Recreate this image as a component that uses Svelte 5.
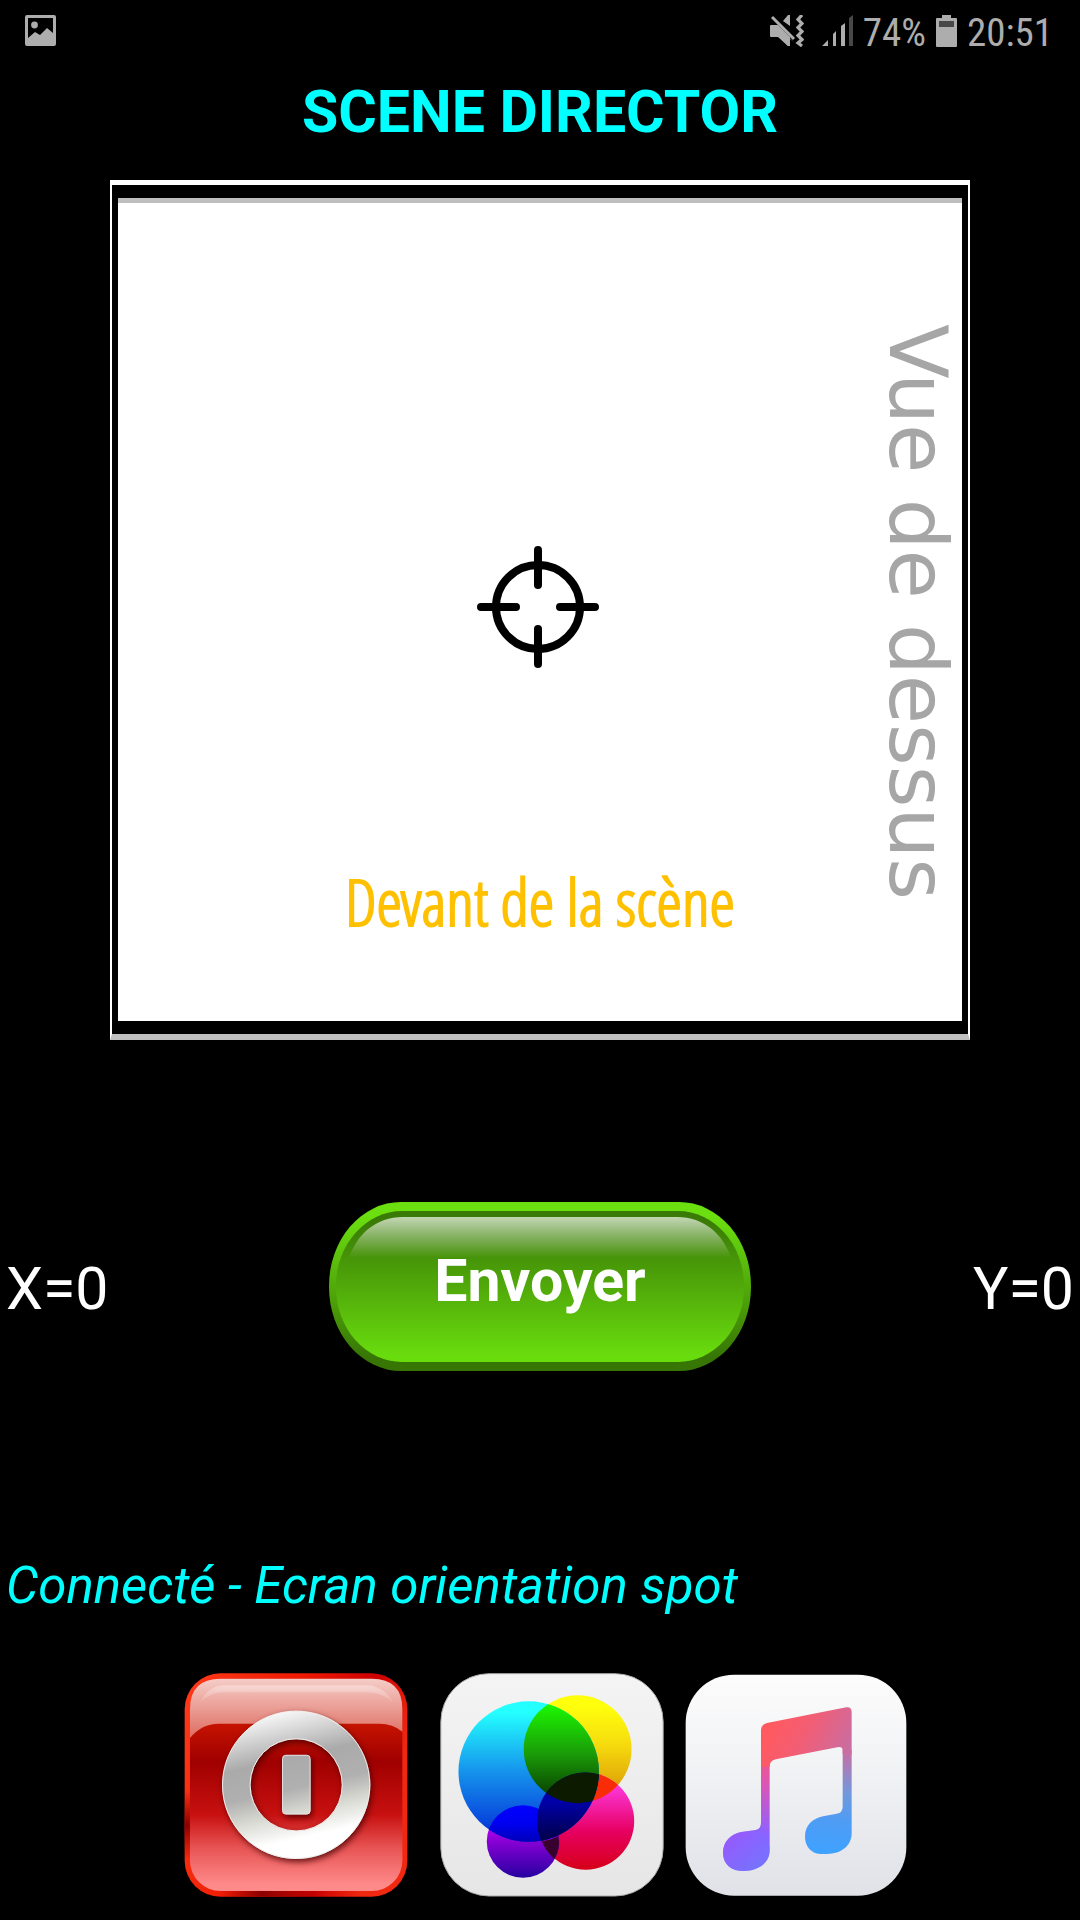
<script>
  let x = $state(0);
  let y = $state(0);
  let status = $state('Connecté - Ecran orientation spot');
</script>

<div class="screen">
  <div class="statusbar">
    <svg class="picture" viewBox="0 0 31 31" aria-hidden="true">
      <path fill="#adadad" fill-rule="evenodd" d="M2 0H29Q31 0 31 2V29Q31 31 29 31H2Q0 31 0 29V2Q0 0 2 0ZM3 3V23L10 17L15 20L22 13L28 18V3Z" />
      <circle cx="9.500" cy="10" r="3.400" fill="#adadad" />
    </svg>
    <div class="indicators">
      <svg class="mute" viewBox="0 0 34 32" aria-hidden="true">
        <path fill="#adadad" d="M1 10H5L24 27L20 24V31H18L9 22H1Q0 22 0 21V11Q0 10 1 10ZM18 0H20V11L13 6Z" />
        <path fill="#adadad" d="M4 10H8L20 22V31H18L8 22H4Z" />
        <path d="M2 2L24 24" stroke="#adadad" stroke-width="3" />
        <path d="M32 0L28 4.500L32 8.500L28 12.500L32 16.500L28 20.500L32 24.500L28 28L32 31" fill="none" stroke="#adadad" stroke-width="3.200" />
      </svg>
      <svg class="signal" viewBox="0 0 31 32" aria-hidden="true">
        <path fill="#adadad" d="M0 31L6 25V31ZM11 19L14 16V31H11ZM19 11L23 8V31H19Z" />
        <path fill="#484848" d="M27 3L31 0V31H27Z" />
      </svg>
      <span class="battery-text">74%</span>
      <svg class="battery" viewBox="0 0 21 32" aria-hidden="true">
        <path fill="#adadad" d="M6 0H15V3H20Q21 3 21 4V31Q21 32 20 32H1Q0 32 0 31V4Q0 3 1 3H6Z" />
        <path fill="#484848" d="M3 6H18V12H3Z" />
      </svg>
      <span class="clock">20:51</span>
    </div>
  </div>

  <h1>SCENE DIRECTOR</h1>

  <main>
    <section class="stage" aria-label="Scène">
      <div class="floor">
        <svg class="target" viewBox="0 0 122 122" aria-hidden="true">
          <g fill="none" stroke="#000" stroke-width="8" stroke-linecap="round">
            <circle cx="61" cy="61" r="42" />
            <path d="M61 4V39M61 83V118M4 61H39M83 61H118" />
          </g>
        </svg>
        <span class="front">Devant de la scène</span>
        <span class="top">Vue de dessus</span>
      </div>
    </section>

    <div class="controls">
      <span class="coord">X={x}</span>
      <button class="send" type="button">
        <svg viewBox="0 0 422 169" preserveAspectRatio="none" aria-hidden="true">
          <defs>
            <linearGradient id="rim" x2="0" y2="1"><stop offset="0.080" stop-color="#6bdf0f" /><stop offset="0.920" stop-color="#377605" /></linearGradient>
            <linearGradient id="body" x2="0" y2="1"><stop offset="0" stop-color="#397a06" /><stop offset="0.080" stop-color="#3a7c06" /><stop offset="0.320" stop-color="#479508" /><stop offset="0.960" stop-color="#69dc0e" /></linearGradient>
            <linearGradient id="gloss" x2="0" y2="1"><stop offset="0" stop-color="#fff" stop-opacity="0.700" /><stop offset="1" stop-color="#fff" stop-opacity="0" /></linearGradient>
          </defs>
          <rect width="422" height="169" rx="72" ry="84" fill="url(#rim)" />
          <rect x="7" y="9" width="408" height="151" rx="66" ry="75" fill="url(#body)" />
          <path d="M20 56C28 32 47 15 74 15H348C375 15 394 32 402 56Z" fill="url(#gloss)" />
        </svg>
        <span>Envoyer</span>
      </button>
      <span class="coord">Y={y}</span>
    </div>

    <p class="status">{status}</p>
  </main>

  <nav>
    <button type="button" aria-label="Arrêt">
      <svg viewBox="42 36 673 675" aria-hidden="true">
        <defs>
          <linearGradient id="frame" x2="1" y2="0.300"><stop offset="0" stop-color="#ff3a1a" /><stop offset="0.500" stop-color="#ee1800" /><stop offset="0.800" stop-color="#cc0000" /><stop offset="1" stop-color="#f02810" /></linearGradient>
          <linearGradient id="left" x2="0" y2="1"><stop offset="0" stop-color="#8c0000" stop-opacity="0" /><stop offset="0.500" stop-color="#8c0000" /><stop offset="1" stop-color="#8c0000" stop-opacity="0" /></linearGradient>
          <linearGradient id="base"><stop offset="0" stop-color="#8c0000" stop-opacity="0" /><stop offset="0.400" stop-color="#8c0000" /><stop offset="1" stop-color="#8c0000" stop-opacity="0" /></linearGradient>
          <linearGradient id="red" x2="0" y2="1"><stop offset="0.200" stop-color="#c81400" /><stop offset="0.390" stop-color="#a00000" /><stop offset="0.640" stop-color="#c81010" /><stop offset="0.800" stop-color="#e85555" /><stop offset="0.970" stop-color="#ff8a8a" /></linearGradient>
          <linearGradient id="shine" x2="0" y2="1"><stop offset="0" stop-color="#f5cdc8" /><stop offset="1" stop-color="#df6c60" /></linearGradient>
          <linearGradient id="arc" x2="0" y2="1"><stop offset="0" stop-color="#fff" stop-opacity="0.350" /><stop offset="1" stop-color="#fff" stop-opacity="0.100" /></linearGradient>
          <linearGradient id="metal" gradientUnits="userSpaceOnUse" x1="330" y1="150" x2="430" y2="595"><stop offset="0" stop-color="#fafafa" /><stop offset="0.320" stop-color="#aaa" /><stop offset="0.520" stop-color="#b0b0b0" /><stop offset="0.680" stop-color="#d8dad2" /><stop offset="0.850" stop-color="#fff" /></linearGradient>
          <filter id="shadow" x="-20%" y="-20%" width="140%" height="140%"><feDropShadow dx="5" dy="9" stdDeviation="9" flood-color="#400" flood-opacity="0.800" /></filter>
        </defs>
        <rect x="43" y="37" width="671" height="673" rx="108" fill="url(#frame)" />
        <rect x="43" y="390" width="30" height="210" fill="url(#left)" />
        <rect x="150" y="680" width="320" height="30" fill="url(#base)" />
        <rect x="59" y="53" width="640" height="640" rx="92" fill="url(#red)" />
        <path d="M59 232V145Q59 53 151 53H607Q699 53 699 145V213Q670 189 630 189H145Q95 189 59 232Z" fill="url(#shine)" />
        <path d="M90 124Q115 73 165 73H590Q640 73 672 124Q635 94 595 94H160Q120 94 90 124Z" fill="url(#arc)" />
        <path filter="url(#shadow)" fill="url(#metal)" fill-rule="evenodd" stroke="#f2f2f2" stroke-width="3" d="M157 373a222 222 0 1 0 444 0a222 222 0 1 0 -444 0ZM240 373a139 139 0 1 0 278 0a139 139 0 1 0 -278 0Z" />
        <rect x="338" y="284" width="83" height="177" rx="10" fill="url(#metal)" stroke="#e4e4e4" stroke-width="3" filter="url(#shadow)" />
      </svg>
    </button>
    <button class="colors" type="button" aria-label="Couleurs">
      <svg viewBox="35 39 672 673" aria-hidden="true">
        <defs>
          <linearGradient id="tile" x2="0" y2="1"><stop offset="0" stop-color="#f4f4f4" /><stop offset="1" stop-color="#e6e6e6" /></linearGradient>
          <linearGradient id="cyan" x2="0" y2="1"><stop offset="0.080" stop-color="#24ffff" /><stop offset="0.500" stop-color="#1593ec" /><stop offset="0.850" stop-color="#0848dc" /><stop offset="1" stop-color="#0624c8" /></linearGradient>
          <linearGradient id="yellow" x2="0" y2="1"><stop offset="0.100" stop-color="#ffff0c" /><stop offset="0.450" stop-color="#f6dc0e" /><stop offset="0.800" stop-color="#e2aa08" /><stop offset="1" stop-color="#f86000" /></linearGradient>
          <linearGradient id="pink" x2="0" y2="1"><stop offset="0.100" stop-color="#ff3ce4" /><stop offset="0.600" stop-color="#e60062" /><stop offset="1" stop-color="#d60018" /></linearGradient>
          <linearGradient id="purple" x2="0" y2="1"><stop offset="0" stop-color="#5000ff" /><stop offset="0.360" stop-color="#a400e4" /><stop offset="1" stop-color="#2600a0" /></linearGradient>
          <linearGradient id="blue" x2="0" y2="1"><stop offset="0" stop-color="#0000ff" /><stop offset="0.250" stop-color="#0000f0" /><stop offset="0.550" stop-color="#0000b0" /></linearGradient>
          <linearGradient id="navy" x2="0" y2="1"><stop offset="0.300" stop-color="#0000a8" /><stop offset="0.700" stop-color="#000048" /></linearGradient>
          <linearGradient id="green" x2="0" y2="1"><stop offset="0.050" stop-color="#1cff00" /><stop offset="0.550" stop-color="#1a9a08" /><stop offset="0.900" stop-color="#0a4800" /></linearGradient>
          <clipPath id="inCyan"><circle cx="301" cy="335" r="211" /></clipPath>
          <clipPath id="inYellow"><circle cx="448" cy="268" r="162" /></clipPath>
        </defs>
        <rect x="37" y="41" width="668" height="668" rx="145" fill="url(#tile)" stroke="#aaa" stroke-width="3" />
        <circle cx="448" cy="268" r="162" fill="url(#yellow)" />
        <circle cx="472" cy="484" r="146" fill="url(#pink)" />
        <g clip-path="url(#inYellow)"><circle cx="472" cy="484" r="146" fill="#f82c06" /></g>
        <circle cx="284" cy="545" r="109" fill="url(#purple)" />
        <circle cx="301" cy="335" r="211" fill="url(#cyan)" />
        <g clip-path="url(#inCyan)">
          <circle cx="284" cy="545" r="109" fill="url(#blue)" />
          <circle cx="448" cy="268" r="162" fill="url(#green)" />
          <circle cx="472" cy="484" r="146" fill="url(#navy)" />
          <g clip-path="url(#inYellow)"><circle cx="472" cy="484" r="146" fill="#0c1a00" /></g>
        </g>
        <path d="M340 544Q368 542 390 528Q398 565 378 598Q352 575 340 544Z" fill="#38002c" />
      </svg>
    </button>
    <button type="button" aria-label="Musique">
      <svg viewBox="45 39 668 672" aria-hidden="true">
        <defs>
          <linearGradient id="paper" x2="0" y2="1"><stop offset="0" stop-color="#fcfcfc" /><stop offset="0.400" stop-color="#f2f3f5" /><stop offset="1" stop-color="#e1e2e8" /></linearGradient>
          <linearGradient id="stemA" gradientUnits="userSpaceOnUse" x1="290" y1="200" x2="270" y2="620"><stop offset="0.080" stop-color="#ff5a60" /><stop offset="0.400" stop-color="#dd55b4" /><stop offset="0.760" stop-color="#9060ff" /><stop offset="1" stop-color="#7474ff" /></linearGradient>
          <linearGradient id="stemB" gradientUnits="userSpaceOnUse" x1="530" y1="180" x2="500" y2="580"><stop offset="0" stop-color="#e06080" /><stop offset="0.250" stop-color="#c470a8" /><stop offset="0.550" stop-color="#7099dc" /><stop offset="0.750" stop-color="#4f9cf4" /><stop offset="1" stop-color="#3fa2ff" /></linearGradient>
          <linearGradient id="beam" gradientUnits="userSpaceOnUse" x1="310" y1="190" x2="530" y2="300"><stop offset="0" stop-color="#ff5a60" /><stop offset="0.400" stop-color="#f25d74" /><stop offset="1" stop-color="#c86ea4" /></linearGradient>
          <linearGradient id="bulb" gradientUnits="userSpaceOnUse" x1="170" y1="550" x2="300" y2="620"><stop offset="0" stop-color="#9c55fa" /><stop offset="1" stop-color="#7076ff" /></linearGradient>
        </defs>
        <rect x="48" y="44" width="662" height="663" rx="145" fill="url(#paper)" />
        <path fill="url(#stemA)" d="M274 210H300V570C300 610 265 633 222 633C186 633 160 614 160 578C160 544 183 523 215 516L255 511Q274 508 274 488Z" />
        <path fill="url(#bulb)" d="M258 510Q274 507 274 492L300 560V570C300 610 265 633 222 633C186 633 160 614 160 578C160 544 183 523 215 516Z" opacity="0.600" />
        <path fill="url(#stemB)" d="M519 270H546V520C546 558 514 582 472 582H452C424 580 406 558 406 530C406 494 430 476 460 469L501 461Q519 458 519 440Z" />
        <path fill="url(#beam)" d="M274 212Q274 193 292 189L530 142Q546 140 546 156V282H519V272Q519 258 503 262L318 298Q300 302 300 320H274Z" />
      </svg>
    </button>
  </nav>
</div>

<style>
  :global(body) {
    margin: 0;
    background: #000;
  }
  .screen {
    box-sizing: border-box;
    min-height: 100vh;
    display: flex;
    flex-direction: column;
    background: #000;
    color: #fff;
    font-family: Roboto, 'Liberation Sans', sans-serif;
    padding-bottom: 23px;
  }
  .statusbar {
    display: flex;
    align-items: center;
    justify-content: space-between;
    height: 61px;
    padding: 0 27px 0 25px;
    color: #adadad;
    font-family: 'Roboto Condensed', Roboto, sans-serif;
    font-size: 39px;
    line-height: 46px;
  }
  .indicators {
    display: flex;
    align-items: center;
    gap: 10px;
  }
  .picture {
    width: 31px;
    height: 31px;
  }
  .mute {
    width: 34px;
    height: 32px;
    margin-right: 8px;
  }
  .signal {
    width: 31px;
    height: 32px;
  }
  .battery {
    width: 21px;
    height: 32px;
  }
  .battery-text,
  .clock {
    padding-top: 4px;
  }
  h1 {
    margin: 16px 0 0;
    color: #0ff;
    font-size: 59px;
    line-height: 70px;
    font-weight: 700;
    text-align: center;
  }
  main {
    display: flex;
    flex-direction: column;
  }
  .stage {
    box-sizing: border-box;
    width: 80%;
    max-width: 860px;
    margin: 33px auto 0;
    border: solid #fff;
    border-width: 5px 2px 0;
    border-bottom: 6px solid #bfbfbf;
    background: #000;
    padding: 13px 6px;
  }
  .floor {
    box-sizing: border-box;
    height: 823px;
    border-top: 5px solid #bfbfbf;
    background: #fff;
    position: relative;
  }
  .target {
    position: absolute;
    left: calc(50% - 63px);
    top: 343px;
    width: 122px;
    height: 122px;
  }
  .front {
    position: absolute;
    left: 0;
    right: 0;
    bottom: 80px;
    text-align: center;
    color: #ffc000;
    font-family: 'Open Sans Condensed Light', 'Roboto Condensed', 'Open Sans', sans-serif;
    font-size: 65px;
    line-height: 80px;
    -webkit-text-stroke: 2px #ffc000;
    white-space: nowrap;
  }
  .top {
    position: absolute;
    right: 5px;
    top: 0;
    bottom: 0;
    writing-mode: vertical-rl;
    text-align: center;
    color: #a6a6a6;
    font-family: 'DejaVu Sans', sans-serif;
    font-size: 80px;
    line-height: 80px;
    white-space: nowrap;
  }
  .controls {
    display: grid;
    grid-template-columns: 1fr auto 1fr;
    align-items: center;
    margin-top: 162px;
    padding: 0 6px;
  }
  .coord {
    padding-top: 4px;
    font-size: 59px;
    line-height: 70px;
  }
  .coord:last-child {
    text-align: right;
  }
  button {
    border: 0;
    padding: 0;
    background: none;
    color: inherit;
    font-family: inherit;
    cursor: pointer;
  }
  .send {
    display: grid;
    place-items: center;
    width: 422px;
    height: 169px;
    font-size: 59px;
    line-height: 70px;
    font-weight: 700;
  }
  .send svg,
  .send span {
    grid-area: 1 / 1;
  }
  .send svg {
    width: 100%;
    height: 169px;
  }
  .send span {
    padding-bottom: 12px;
    z-index: 1;
  }
  .status {
    margin: 180px 6px 0;
    color: #0ff;
    font-size: 51px;
    line-height: 70px;
    font-style: italic;
  }
  nav {
    display: flex;
    justify-content: center;
    gap: 20px;
    margin-top: auto;
    padding-left: 12px;
  }
  nav svg {
    display: block;
    width: 224px;
    height: 224px;
  }
  .colors {
    margin-left: 12px;
  }
</style>
